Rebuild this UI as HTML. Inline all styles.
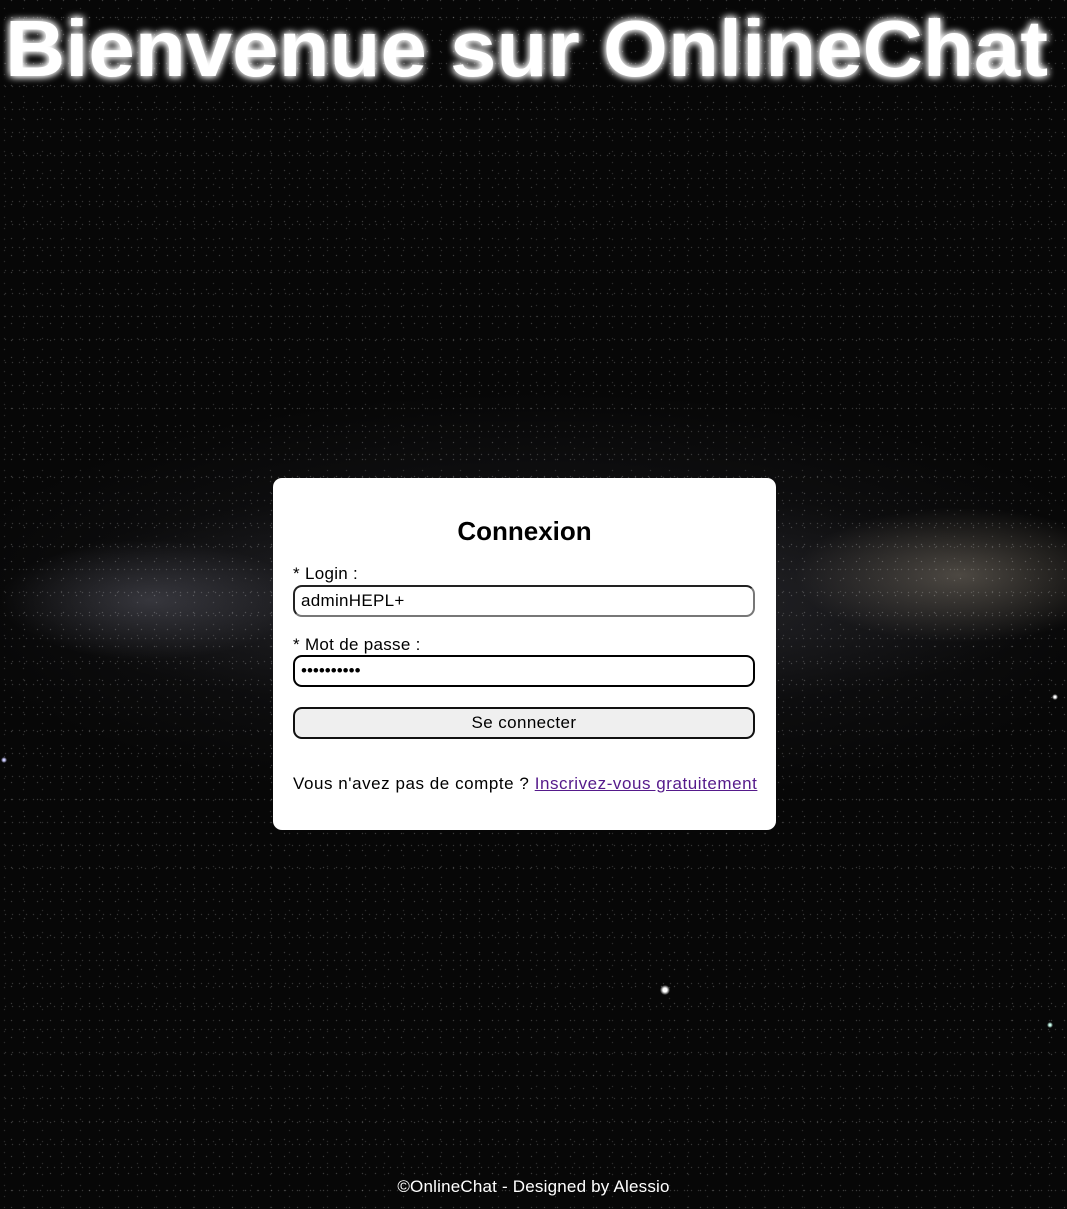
<!DOCTYPE html>
<html><head><meta charset="utf-8"><style>
html,body{margin:0;padding:0;width:1067px;height:1209px;overflow:hidden;font-family:"Liberation Sans",sans-serif}
body{position:relative;background:#070707}
.band{position:absolute;left:0;top:0;width:1067px;height:1209px;
background:
radial-gradient(circle at 665px 990px, #fff 0 2px, transparent 5px),
radial-gradient(circle at 1050px 1025px, #cfe 0 1px, transparent 3px),
radial-gradient(circle at 1055px 697px, #fff 0 1px, transparent 3px),
radial-gradient(circle at 4px 760px, #ccf 0 1px, transparent 3px),
radial-gradient(ellipse 220px 90px at 960px 575px, rgba(150,140,125,.45), transparent 75%),
radial-gradient(ellipse 200px 80px at 150px 600px, rgba(120,120,135,.35), transparent 75%),
radial-gradient(ellipse 700px 150px at 540px 600px, rgba(80,80,90,.35), transparent 75%),
radial-gradient(ellipse 750px 260px at 540px 600px, rgba(35,35,40,.6), transparent 80%);}
.stars{position:absolute;inset:0;opacity:.6;
background-image:radial-gradient(circle,rgba(255,255,255,.35) 0.5px,transparent 0.9px),radial-gradient(circle,rgba(255,255,255,.25) 0.5px,transparent 0.9px),radial-gradient(circle,rgba(255,255,255,.3) 0.5px,transparent 0.9px);
background-size:13px 17px,19px 11px,7px 23px;background-position:5px 9px,14px 3px,2px 6px}
svg.t{position:absolute;left:0;top:0}
.card{position:absolute;left:273px;top:478px;width:503px;height:352px;background:#fff;border-radius:9px}
h2{position:absolute;left:0;width:503px;top:38px;margin:0;text-align:center;font-size:26px;font-weight:bold;color:#000}
.lab{position:absolute;left:20px;font-size:17px;color:#000;letter-spacing:.3px}
.inp{position:absolute;left:20px;width:462px;height:32px;border:2px solid #000;border-radius:9px;box-sizing:border-box;font-size:17px;line-height:28px;padding-left:6px;letter-spacing:.3px}
.btn{position:absolute;left:20px;top:229px;width:462px;height:32px;box-sizing:border-box;border:2px solid #111;border-radius:9px;background:#efefef;text-align:center;font-size:17px;line-height:28px;letter-spacing:.4px}
.foot{position:absolute;left:20px;top:296px;font-size:17px;color:#000;white-space:nowrap;letter-spacing:.55px}
.foot a{color:#551a8b;text-decoration:underline}
.copy{position:absolute;top:1177px;width:1067px;text-align:center;color:#fff;font-size:17px;letter-spacing:.2px}
</style></head><body>
<div class="band"></div><div class="stars"></div>
<svg class="t" width="1067" height="100"><defs><filter id="g" x="-5%" y="-30%" width="110%" height="160%"><feGaussianBlur stdDeviation="4" result="b"/><feMerge><feMergeNode in="b"/><feMergeNode in="b"/><feMergeNode in="SourceGraphic"/></feMerge></filter></defs>
<text x="5" y="76" textLength="1043" lengthAdjust="spacingAndGlyphs" font-family="Liberation Sans" font-weight="bold" font-size="80" fill="#fff" filter="url(#g)">Bienvenue sur OnlineChat</text></svg>
<div class="card">
<h2>Connexion</h2>
<div class="lab" style="top:86px">* Login :</div>
<div class="inp" style="top:107px;border-color:#222 #777 #777 #222">adminHEPL+</div>
<div class="lab" style="top:157px">* Mot de passe :</div>
<div class="inp" style="top:177px;letter-spacing:0">••••••••••</div>
<div class="btn">Se connecter</div>
<div class="foot">Vous n'avez pas de compte ? <a>Inscrivez-vous gratuitement</a></div>
</div>
<div class="copy">©OnlineChat - Designed by Alessio</div>
</body></html>
